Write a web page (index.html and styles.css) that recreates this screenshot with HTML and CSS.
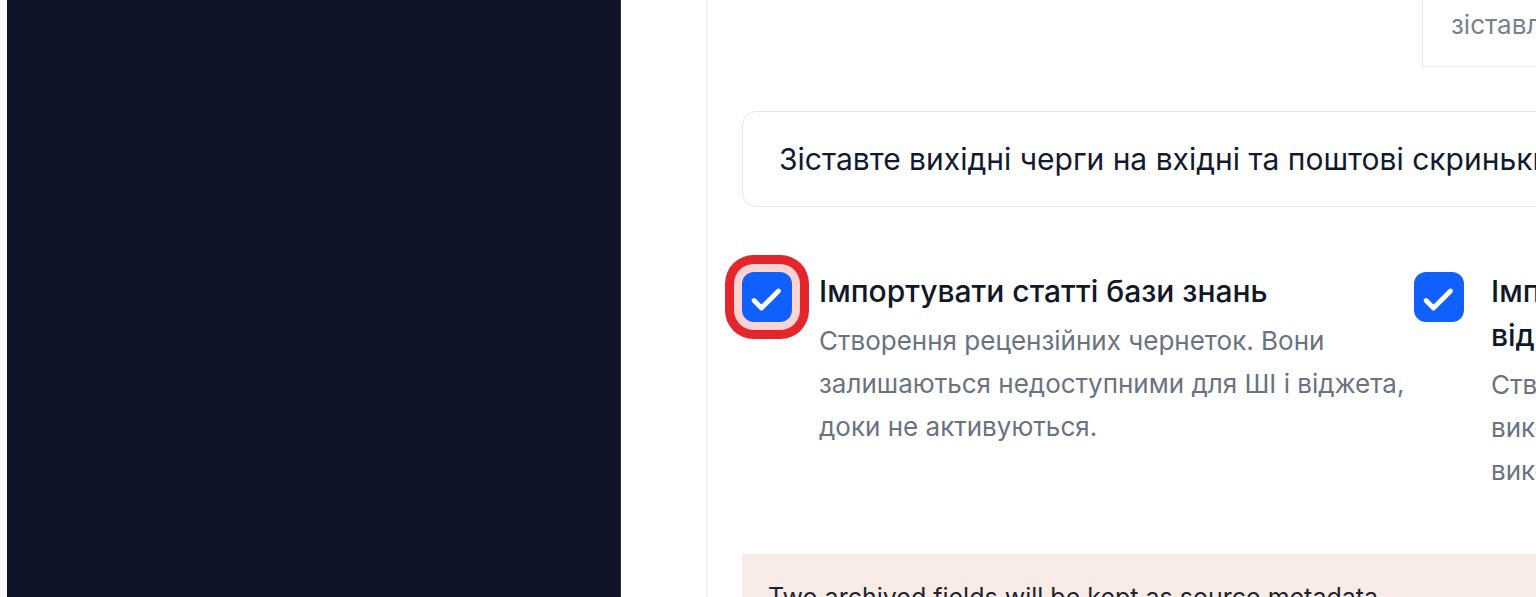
FILE: index.html
```html
<!DOCTYPE html>
<html lang="uk">
<head>
  <meta charset="UTF-8" />
  <meta name="viewport" content="width=device-width, initial-scale=1.0">
  <title>Імпорт бази знань</title>
  <link rel="stylesheet" href="styles.css">
</head>
<body>
  <div class="page">
    <div class="edge"></div>
    <div class="drawer"></div>
    <div class="gutter"></div>

    <main class="main">
      <div class="map-note">
        Кожну чергу буде<br>
        зіставлено автоматично
      </div>

      <div class="queue-input">Зіставте вихідні черги на вхідні та поштові скриньки</div>

      <div class="options">
        <label class="option">
          <span class="check focused">
            <svg viewBox="0 0 50 50" width="50" height="50"><path d="M12 28.5 L19.5 36 L36.5 19" /></svg>
          </span>
          <span class="option-body">
            <span class="option-title">Імпортувати статті бази знань</span>
            <span class="option-desc">Створення рецензійних чернеток. Вони залишаються недоступними для ШІ і віджета, доки не активуються.</span>
          </span>
        </label>

        <label class="option">
          <span class="check">
            <svg viewBox="0 0 50 50" width="50" height="50"><path d="M12 28.5 L19.5 36 L36.5 19" /></svg>
          </span>
          <span class="option-body">
            <span class="option-title">Імпортувати збережені шаблони відповідей</span>
            <span class="option-desc">Створення шаблонів, які агенти можуть використовувати у відповідях, а також використовувати в макросах.</span>
          </span>
        </label>
      </div>

      <div class="notice">Two archived fields will be kept as source metadata.</div>
    </main>
  </div>
</body>
</html>
```

FILE: styles.css
```css
body { margin: 0; overflow: hidden; background: #fff; font-family: "Inter", "Noto Sans", sans-serif; }
.page { display: flex; width: 1536px; height: 597px; overflow: hidden; }
.edge { flex: 0 0 7px; background: #f7f8fa; }
.drawer { flex: 0 0 613px; background: #0e1325; border-right: 1px solid #2a2e44; }
.gutter { flex: 0 0 85px; background: #fff; border-right: 2px solid #f1f1f3; }
.main { flex: 0 0 auto; width: 1400px; padding-left: 34px; }

.map-note {
  margin-left: 680px;
  margin-top: -37px;
  padding: 0 28px 21px;
  border: 1.5px solid #e5e7eb;
  border-top: none;
  color: #7a7f8c;
  font-size: 26px;
  line-height: 41px;
  white-space: nowrap;
}

.queue-input {
  margin-top: 44px;
  height: 94px;
  display: flex;
  align-items: center;
  padding-left: 36px;
  border: 1.5px solid #e5e7eb;
  border-radius: 14px;
  color: #141a2e;
  font-size: 30px;
  white-space: nowrap;
}

.options {
  display: grid;
  grid-template-columns: 668px 668px;
  column-gap: 4px;
  margin-top: 64px;
}
.option { display: flex; align-items: flex-start; gap: 27px; }
.check {
  flex: 0 0 50px;
  height: 50px;
  margin-top: 1px;
  border-radius: 12px;
  background: #105fff;
}
.check svg { display: block; fill: none; stroke: #fff; stroke-width: 4.8; stroke-linecap: round; stroke-linejoin: round; }
.check.focused { box-shadow: 0 0 0 8px #fbd3d3, 0 0 0 17px #e4262c; }
.option-body { display: flex; flex-direction: column; gap: 6px; }
.option-title { color: #111827; font-size: 30px; font-weight: 500; line-height: 44px; margin-top: -2px; }
.option-desc { color: #6b7280; font-size: 26px; line-height: 43px; }

.notice {
  margin-top: 62px;
  padding: 28px 26px;
  background: #f9ece7;
  color: #1f2430;
  font-size: 25px;
  line-height: 30px;
  white-space: nowrap;
}
```
